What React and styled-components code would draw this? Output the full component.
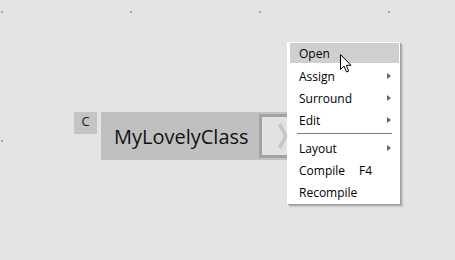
import React from "react";
import styled, { createGlobalStyle } from "styled-components";

const GlobalStyle = createGlobalStyle`
  html, body {
    margin: 0;
    padding: 0;
    background: #e4e4e4;
  }
  body {
    font-family: "Open Sans", "Liberation Sans", sans-serif;
  }
`;

const Canvas = styled.div`
  position: relative;
  width: 455px;
  height: 260px;
  overflow: hidden;
  background: #e4e4e4;
`;

const GridDots = styled.svg`
  position: absolute;
  left: 0;
  top: 0;
`;

const ClassNode = styled.div`
  position: absolute;
  left: ${(p) => p.x}px;
  top: ${(p) => p.y}px;
  display: flex;
  align-items: flex-start;
  gap: 4px;
`;

const Badge = styled.div`
  width: 23px;
  height: 22px;
  background: #c4c4c4;
  color: #1a1a1a;
  font-size: 13px;
  line-height: 13px;
  text-align: center;
  padding-top: 3px;
  box-sizing: border-box;
`;

const NodeBody = styled.div`
  display: flex;
  align-items: center;
  height: 48px;
  background: #c0c0c0;
  padding-right: 14px;
`;

const NodeName = styled.div`
  width: 158px;
  box-sizing: border-box;
  padding-left: 13px;
  font-size: 20px;
  color: #111;
`;

const ExpandBox = styled.div`
  width: 42px;
  height: 44px;
  box-sizing: border-box;
  border: 3px solid #a2a2a2;
  background: #e2e2e2;
  display: flex;
  align-items: center;
  padding-left: 16px;
`;

const Menu = styled.div`
  position: absolute;
  left: 287px;
  top: 42px;
  width: 113px;
  height: 162px;
  box-sizing: border-box;
  background: #fff;
  padding: 1px 1px 0 3px;
  box-shadow: 1px 1px 0 #a0a0a0, 2px 2px 0 #b4b4b4, 3px 3px 1px #cacaca;
  font-size: 12px;
  color: #000;
`;

const Item = styled.div`
  display: grid;
  grid-template-columns: 60px 1fr 4px;
  align-items: center;
  height: ${(p) => (p.active ? 20 : 22)}px;
  margin-bottom: ${(p) => (p.active ? 2 : 0)}px;
  padding: 0 8px 0 9px;
  background: ${(p) => (p.active ? "#cfcfcf" : "transparent")};
  white-space: nowrap;
`;

const SubArrow = styled.span`
  width: 0;
  height: 0;
  border-top: 3.5px solid transparent;
  border-bottom: 3.5px solid transparent;
  border-left: 4px solid #666;
`;

const Separator = styled.div`
  height: 6px;
  display: flex;
  align-items: center;
  padding: 0 7px;

  &::before {
    content: "";
    flex: 1;
    height: 1px;
    background: #7c7c7c;
    margin-top: -2px;
  }
`;

const Cursor = styled.svg`
  position: absolute;
  left: 340px;
  top: 54px;
`;

const items = [
  { label: "Open", active: true },
  { label: "Assign", sub: true },
  { label: "Surround", sub: true },
  { label: "Edit", sub: true },
  { sep: true },
  { label: "Layout", sub: true },
  { label: "Compile", key: "F4" },
  { label: "Recompile" },
];

export default function App() {
  return (
    <>
      <GlobalStyle />
      <Canvas>
        <GridDots width="455" height="260">
          <defs>
            <pattern id="dots" x="1" y="11" width="129" height="129" patternUnits="userSpaceOnUse">
              <rect x="0" y="0" width="2" height="2" fill="#a9a9a9" />
            </pattern>
          </defs>
          <rect width="455" height="260" fill="url(#dots)" />
        </GridDots>

        <ClassNode x={74} y={112}>
          <Badge>C</Badge>
          <NodeBody>
            <NodeName>MyLovelyClass</NodeName>
            <ExpandBox>
              <svg width="10" height="26" viewBox="0 0 10 26">
                <polyline points="1.5,1 8,13 1.5,25" fill="none" stroke="#c6c6c6" strokeWidth="3.5" />
              </svg>
            </ExpandBox>
          </NodeBody>
        </ClassNode>

        <Menu>
          {items.map((it, i) =>
            it.sep ? (
              <Separator key={i} />
            ) : (
              <Item key={i} active={it.active}>
                <span>{it.label}</span>
                <span>{it.key || ""}</span>
                {it.sub ? <SubArrow /> : <span />}
              </Item>
            )
          )}
        </Menu>

        <Cursor width="13" height="20" viewBox="0 0 13 20">
          <path
            d="M0.5 0.5 L0.5 15.5 L4 12 L6.5 18 L8.7 17 L6.3 11.3 L11 11.3 Z"
            fill="#fff"
            stroke="#000"
            strokeWidth="1"
          />
        </Cursor>
      </Canvas>
    </>
  );
}
